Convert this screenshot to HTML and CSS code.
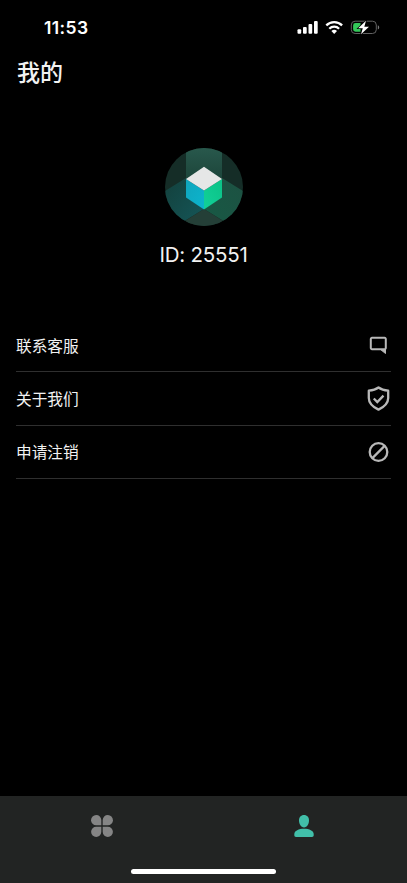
FILE: index.html
```html
<!DOCTYPE html>
<html lang="zh-CN">
<head>
    <meta charset="UTF-8">
    <meta name="viewport" content="width=device-width, initial-scale=1.0">
    <title>我的</title>
    <link rel="stylesheet" href="styles.css">
</head>
<body>
    <div class="status-bar">
        <span class="time">11:53</span>
        <svg class="status-icons" width="84" height="16" viewBox="0 0 84 16">
            <g fill="#fff">
                <rect x="0.5" y="9.3" width="3.7" height="4.4" rx="1"/>
                <rect x="6" y="7" width="3.7" height="6.7" rx="1"/>
                <rect x="11.5" y="4" width="3.7" height="9.7" rx="1"/>
                <rect x="17" y="1" width="3.7" height="12.7" rx="1"/>
            </g>
            <g fill="none" stroke="#fff" stroke-width="2.3">
                <path d="M29.3 5.4a11.3 11.3 0 0 1 15.8 0"/>
                <path d="M32.3 8.7a7 7 0 0 1 9.8 0"/>
            </g>
            <path d="M34.4 11a4 4 0 0 1 5.6 0l-2.8 2.9z" fill="#fff"/>
            <rect x="54.3" y="1.2" width="25" height="12.3" rx="3.8" fill="none" stroke="#626262"/>
            <path d="M80.8 5.2v4.3c1.9-.7 1.9-3.6 0-4.3z" fill="#777"/>
            <path d="M58.5 3h5v8.7h-5a2.4 2.4 0 0 1-2.4-2.4V5.4A2.4 2.4 0 0 1 58.5 3z" fill="#34c759"/>
            <path d="M69 .8l-7.8 7.5h4.6L64 14.2l8-7.5h-4.7z" fill="#fff" stroke="#000" stroke-width="1.4" paint-order="stroke"/>
        </svg>
    </div>

    <h1>我的</h1>

    <div class="profile">
        <svg class="avatar" width="78" height="78" viewBox="0 0 78 78">
            <defs>
                <clipPath id="circle"><circle cx="39" cy="39" r="39"/></clipPath>
                <linearGradient id="band" x1="0" y1="0" x2="0" y2="1">
                    <stop offset="0" stop-color="#28584c"/>
                    <stop offset="1" stop-color="#1c4439"/>
                </linearGradient>
                <linearGradient id="side-left" x1="0" y1="0" x2="1" y2="1">
                    <stop offset="0" stop-color="#13403c"/>
                    <stop offset="1" stop-color="#15585a"/>
                </linearGradient>
                <linearGradient id="side-right" x1="1" y1="0" x2="0" y2="1">
                    <stop offset="0" stop-color="#1d5142"/>
                    <stop offset="1" stop-color="#175a45"/>
                </linearGradient>
                <linearGradient id="cube-left" x1="0" y1="0" x2="1" y2="1">
                    <stop offset="0" stop-color="#10a5bd"/>
                    <stop offset="1" stop-color="#0bb5cd"/>
                </linearGradient>
                <linearGradient id="cube-right" x1="1" y1="0" x2="0" y2="1">
                    <stop offset="0" stop-color="#0bc286"/>
                    <stop offset="1" stop-color="#12d199"/>
                </linearGradient>
            </defs>
            <g clip-path="url(#circle)">
                <rect width="78" height="78" fill="#152d27"/>
                <path d="M21 0h36v34H21z" fill="url(#band)"/>
                <path d="M0 43l21-13v19l18 12L8 80H0z" fill="url(#side-left)"/>
                <path d="M78 43L57 30v19L39 61l31 19h8z" fill="url(#side-right)"/>
                <path d="M39 61l30 19H9z" fill="#243f37"/>
            </g>
            <path d="M21 31l18 11.5v19L21 49.5z" fill="url(#cube-left)"/>
            <path d="M57 31L39 42.5v19l18-12z" fill="url(#cube-right)"/>
            <path d="M39 18.8L57 31 39 42.5 21 31z" fill="#e6e7e7"/>
        </svg>
        <div class="user-id">ID: 25551</div>
    </div>

    <div class="menu">
        <div class="menu-item">
            <span>联系客服</span>
            <svg width="24" height="26" viewBox="0 0 24 26">
                <path d="M5 5.8h12.600a1.200 1.200 0 0 1 1.200 1.200v9a1.200 1.200 0 0 1-1.200 1.200H5A1.200 1.200 0 0 1 3.800 16V7A1.200 1.200 0 0 1 5 5.800z" fill="none" stroke="#b8b8b8" stroke-width="2"/>
                <path d="M13.500 17.500h5v4z" fill="#b8b8b8" stroke="#b8b8b8" stroke-linejoin="round"/>
            </svg>
        </div>
        <div class="menu-item">
            <span>关于我们</span>
            <svg width="24" height="26" viewBox="0 0 24 26">
                <path d="M11.500 2.500c2.500 1.900 6 2.900 9.700 3.200v7.200c0 5.200-4.200 9-9.700 11.700-5.500-2.700-9.700-6.500-9.700-11.700V5.700c3.700-.3 7.200-1.300 9.700-3.200z" fill="none" stroke="#b8b8b8" stroke-width="2.300" stroke-linejoin="round"/>
                <path d="M6.800 13.500l3.500 3.600 6.200-6.500" fill="none" stroke="#b8b8b8" stroke-width="2.300"/>
            </svg>
        </div>
        <div class="menu-item">
            <span>申请注销</span>
            <svg width="24" height="26" viewBox="0 0 24 26">
                <circle cx="11.500" cy="13" r="8.800" fill="none" stroke="#b8b8b8" stroke-width="2.300"/>
                <path d="M5.400 19.100L17.600 6.900" stroke="#b8b8b8" stroke-width="2.300"/>
            </svg>
        </div>
    </div>

    <div class="tab-bar">
        <div class="tabs">
            <div class="tab">
                <svg width="22" height="22" viewBox="0 0 22 22" fill="#858585">
                    <path d="M5.200 0a5.100 5.100 0 0 1 5.100 5.100v5.200H5.200A5.100 5.100 0 0 1 5.200 0z"/>
                    <path d="M16.800 0a5.100 5.100 0 0 1 0 10.300h-5.100V5.100A5.100 5.100 0 0 1 16.800 0z"/>
                    <path d="M5.200 11.700h5.100v5.100a5.100 5.100 0 1 1-5.100-5.100z"/>
                    <path d="M11.700 11.700h5.100a5.100 5.100 0 1 1-5.100 5.100z"/>
                </svg>
            </div>
            <div class="tab">
                <svg width="22" height="22" viewBox="0 0 22 22" fill="#41bfa9">
                    <path d="M10 0c3.200 0 5 2.300 5 5.500 0 3.600-2 6.900-5 6.900S5 9.100 5 5.500C5 2.300 6.800 0 10 0z"/>
                    <path d="M10 13.700c5.200 0 9.700 2 9.700 5.300v1.300c0 1-.7 1.600-1.700 1.600H2c-1 0-1.700-.6-1.700-1.600V19c0-3.300 4.500-5.300 9.700-5.300z"/>
                </svg>
            </div>
        </div>
        <div class="home-indicator"></div>
    </div>
</body>
</html>
```
FILE: styles.css
```css
* {
    box-sizing: border-box;
}
body {
    font-family: Inter, "Noto Sans CJK SC", sans-serif;
    background-color: #000;
    color: #f2f2f2;
    margin: 0;
    height: 883px;
    display: flex;
    flex-direction: column;
    overflow: hidden;
}
.status-bar {
    display: flex;
    justify-content: space-between;
    align-items: center;
    height: 54px;
    padding: 1px 26px 0 44px;
    color: #fff;
}
.time {
    font-size: 17.5px;
    font-weight: 600;
    letter-spacing: 0.4px;
}
h1 {
    font-family: "Noto Sans CJK SC", sans-serif;
    font-size: 23px;
    font-weight: 500;
    line-height: 36px;
    margin: -1px 0 0;
    padding-left: 17px;
}
.profile {
    display: flex;
    flex-direction: column;
    align-items: center;
    margin-top: 59px;
}
.avatar {
    display: block;
}
.user-id {
    font-size: 20.5px;
    line-height: 28px;
    margin-top: 15px;
    letter-spacing: -0.25px;
}
.menu {
    margin: 50px 16px 0;
}
.menu-item {
    display: flex;
    justify-content: space-between;
    align-items: center;
    height: 53.3px;
    font-family: "Noto Sans CJK SC", sans-serif;
    font-size: 15.7px;
    border-bottom: 1px solid #2f2f2f;
}
.tab-bar {
    display: flex;
    flex-direction: column;
    justify-content: space-between;
    align-items: center;
    height: 87px;
    margin-top: auto;
    padding-bottom: 9px;
    background-color: #222423;
}
.tabs {
    display: flex;
    width: 100%;
    padding-top: 19px;
}
.tab {
    flex: 1;
    display: flex;
    justify-content: center;
}
.home-indicator {
    width: 145px;
    height: 5px;
    border-radius: 3px;
    background-color: #fff;
}
```
